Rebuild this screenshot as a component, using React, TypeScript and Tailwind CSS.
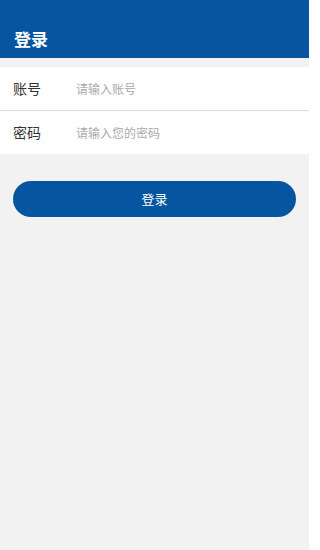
import React from "react";

export default function App() {
  return (
    <div
      className="w-[309px] h-[550px] bg-[#f2f2f2] flex flex-col"
      style={{ fontFamily: '"Noto Sans CJK SC", "Noto Sans", sans-serif' }}
    >
      <div className="h-[58px] bg-[#0555a0] flex items-end px-[14px] pb-[7px]">
        <span className="text-white text-[17px] font-bold leading-[24px]">登录</span>
      </div>
      <div className="mt-[9px] bg-white flex flex-col">
        <div className="h-[44px] flex items-center border-b border-[#dcdcdc]">
          <span className="w-[76px] shrink-0 pl-[13px] text-[14px] text-[#333]">账号</span>
          <span className="text-[12px] text-[#aaaaaa]">请输入账号</span>
        </div>
        <div className="h-[43px] flex items-center">
          <span className="w-[76px] shrink-0 pl-[13px] text-[14px] text-[#333]">密码</span>
          <span className="text-[12px] text-[#aaaaaa]">请输入您的密码</span>
        </div>
      </div>
      <div className="px-[13px] mt-[27px]">
        <button className="w-full h-[36px] rounded-full bg-[#0555a0] text-white text-[13px] flex items-center justify-center">
          登录
        </button>
      </div>
    </div>
  );
}
